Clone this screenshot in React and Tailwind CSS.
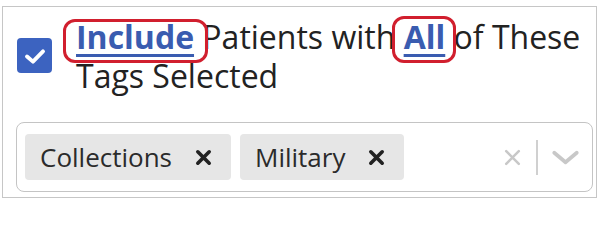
import React from 'react';

const Marked = ({ children, className }) => (
  <span className="relative inline-block">
    <a href="#" className="font-bold text-[#3a5cb0] underline decoration-[3px] underline-offset-[5px]">
      {children}
    </a>
    <span className={`absolute border-[3px] border-[#d11f2e] rounded-[12px] ${className}`} />
  </span>
);

const Tag = ({ label }) => (
  <div className="flex shrink-0 items-center h-[46px] rounded-[4px] bg-[#e6e6e6]">
    <span className="pl-[15px] text-[26px] leading-none text-[#2b2b2b]">{label}</span>
    <svg viewBox="0 0 20 20" className="ml-[22px] mr-[18px] w-[19px] h-[19px] shrink-0">
      <path d="M4 4 L16 16 M16 4 L4 16" stroke="#222" strokeWidth="3.8" strokeLinecap="round" />
    </svg>
  </div>
);

const App = () => {
  return (
    <div className="w-[599px] h-[200px] bg-white pt-[6px] pl-[2px]" style={{ fontFamily: '"Open Sans", sans-serif' }}>
      <div className="w-[595px] h-[192px] border border-[#c6c6c6] pt-[9px] pl-[13px] pr-[3px]">
        <label className="flex items-center">
          <span className="flex shrink-0 items-center justify-center w-[35px] h-[35px] rounded-[4px] bg-[#3c63c0] ml-[1px]">
            <svg viewBox="0 0 20 20" className="w-[34px] h-[34px]">
              <path d="M5.3 10.3 L8.8 13.3 L14.7 7.3" fill="none" stroke="white" strokeWidth="2.3" strokeLinecap="round" strokeLinejoin="round" />
            </svg>
          </span>
          <span className="ml-[24px] pt-[1px] text-[32px] leading-[39px] text-[#222]">
            <Marked className="-left-[13px] -right-[14px] top-[2px] -bottom-[7px]">Include</Marked>{' '}
            Patients with <Marked className="-left-[12px] -right-[11px] -top-[1px] -bottom-[7px]">All</Marked> of These Tags Selected
          </span>
        </label>
        <div className="mt-[27px] flex items-center h-[70px] border border-[#c4c4c4] rounded-[8px] pl-[8px] pr-[12px]">
          <div className="flex flex-1 gap-[9px]">
            <Tag label="Collections" />
            <Tag label="Military" />
          </div>
          <div className="flex items-center">
            <svg viewBox="0 0 20 20" className="w-[21px] h-[21px]">
              <path d="M4 4 L16 16 M16 4 L4 16" stroke="#c8c8c8" strokeWidth="2.4" strokeLinecap="round" />
            </svg>
            <span className="mx-[13px] w-[2px] h-[35px] bg-[#d0d0d0]" />
            <svg viewBox="0 0 30 16" className="w-[29px] h-[15px]">
              <path d="M3 3 L15 13 L27 3" fill="none" stroke="#c8c8c8" strokeWidth="4" strokeLinecap="round" strokeLinejoin="round" />
            </svg>
          </div>
        </div>
      </div>
    </div>
  );
};

export default App;
